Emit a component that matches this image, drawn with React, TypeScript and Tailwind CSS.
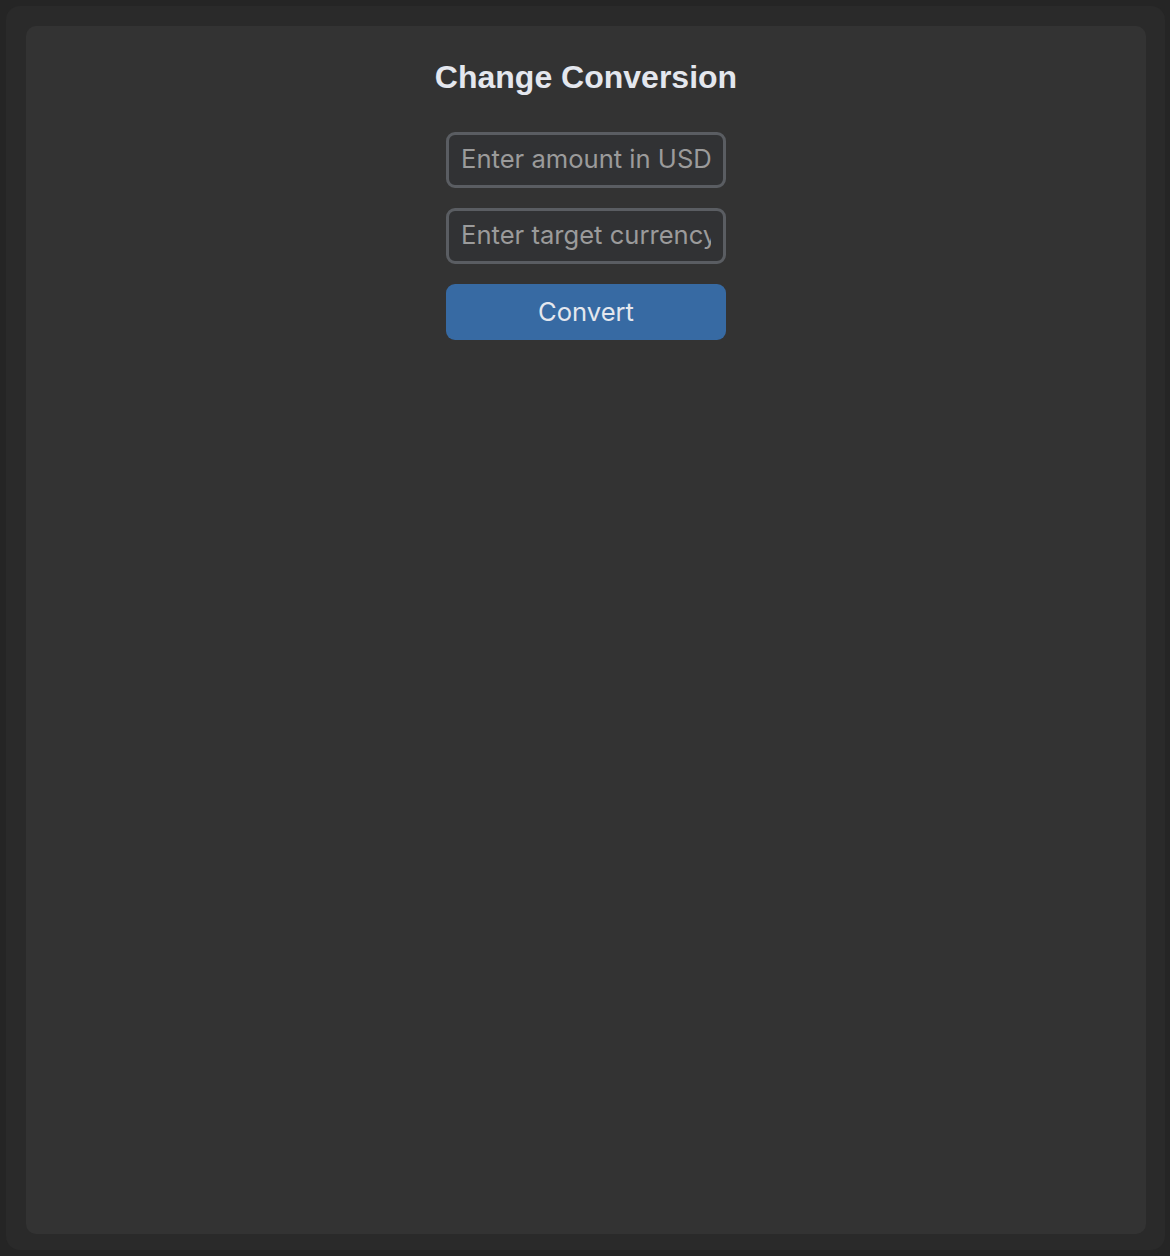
export default function App() {
  return (
    <div className="h-[1256px] w-full bg-[#252525] p-[6px] pb-[6px] pr-[5px]">
      <div className="h-full rounded-[14px] bg-[#2a2a2a] pt-[20px] pl-[20px] pr-[19px] pb-[16px]">
        <div className="flex h-full flex-col items-center rounded-[10px] bg-[#333333] pt-[32px]">
          <h1
            className="text-[32px] leading-[38px] font-bold text-[#e4e7ee]"
            style={{ fontFamily: '"Liberation Sans", Arial, sans-serif' }}
          >
            Change Conversion
          </h1>
          <div
            className="mt-[36px] flex w-[280px] flex-col gap-[20px]"
            style={{ fontFamily: 'Inter, "Noto Sans", sans-serif' }}
          >
            <input
              type="text"
              placeholder="Enter amount in USD"
              className="h-[56px] w-full rounded-[9px] border-[3px] border-[#5a5d62] bg-[#313234] px-[12px] pb-[3px] text-[25.6px] text-[#e4e7ee] placeholder-[#9b9b9b] outline-none"
            />
            <input
              type="text"
              placeholder="Enter target currency"
              className="h-[56px] w-full rounded-[9px] border-[3px] border-[#5a5d62] bg-[#313234] px-[12px] pb-[3px] text-[25.6px] text-[#e4e7ee] placeholder-[#9b9b9b] outline-none"
            />
            <button className="h-[56px] w-full rounded-[9px] bg-[#376aa3] text-[25.6px] text-[#e4e7ee]">
              Convert
            </button>
          </div>
        </div>
      </div>
    </div>
  );
}
